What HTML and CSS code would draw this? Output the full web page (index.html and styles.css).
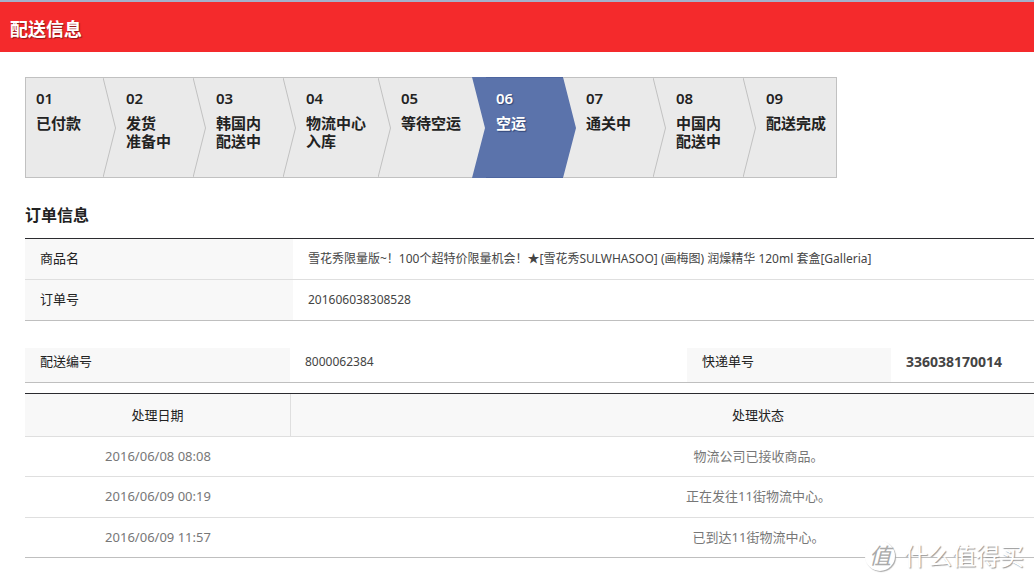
FILE: index.html
```html
<!DOCTYPE html>
<html lang="zh-CN">
<head>
<meta charset="utf-8">
<title>配送信息</title>
<link rel="stylesheet" href="styles.css">
</head>
<body>
<header class="page-header"><h1>配送信息</h1></header>
<main class="content">
  <ol class="steps">
    <li class="step first"><div class="step-text"><b>01</b><span>已付款</span></div><svg class="arrow" viewBox="0 0 13 101" preserveAspectRatio="none"><path class="edge" d="M0 0.5 12.5 51 0 100.5"/></svg></li>
    <li class="step"><div class="step-text"><b>02</b><span>发货<br>准备中</span></div><svg class="arrow" viewBox="0 0 13 101" preserveAspectRatio="none"><path class="edge" d="M0 0.5 12.5 51 0 100.5"/></svg></li>
    <li class="step"><div class="step-text"><b>03</b><span>韩国内<br>配送中</span></div><svg class="arrow" viewBox="0 0 13 101" preserveAspectRatio="none"><path class="edge" d="M0 0.5 12.5 51 0 100.5"/></svg></li>
    <li class="step wide"><div class="step-text"><b>04</b><span>物流中心<br>入库</span></div><svg class="arrow" viewBox="0 0 13 101" preserveAspectRatio="none"><path class="edge" d="M0 0.5 12.5 51 0 100.5"/></svg></li>
    <li class="step wide"><div class="step-text"><b>05</b><span>等待空运</span></div><svg class="arrow before-active" viewBox="0 0 14 101" preserveAspectRatio="none"><path class="fill-active" d="M0 0H14V101H0L13 51Z"/></svg></li>
    <li class="step active" aria-current="step"><div class="step-text"><b>06</b><span>空运</span></div><svg class="arrow" viewBox="0 0 13 101" preserveAspectRatio="none"><path class="fill-idle" d="M0 0H13V101H0L13 51Z"/><path class="edge" d="M0 0.5H13M0 100.5H13"/></svg></li>
    <li class="step"><div class="step-text"><b>07</b><span>通关中</span></div><svg class="arrow" viewBox="0 0 13 101" preserveAspectRatio="none"><path class="edge" d="M0 0.5 12.5 51 0 100.5"/></svg></li>
    <li class="step"><div class="step-text"><b>08</b><span>中国内<br>配送中</span></div><svg class="arrow" viewBox="0 0 13 101" preserveAspectRatio="none"><path class="edge" d="M0 0.5 12.5 51 0 100.5"/></svg></li>
    <li class="step last"><div class="step-text"><b>09</b><span>配送完成</span></div></li>
  </ol>

  <h2>订单信息</h2>
  <table class="info order">
    <tr><th scope="row">商品名</th><td>雪花秀限量版~！100个超特价限量机会！★[雪花秀SULWHASOO] (画梅图) 润燥精华 120ml 套盒[Galleria]</td></tr>
    <tr><th scope="row">订单号</th><td>201606038308528</td></tr>
  </table>

  <table class="info shipment">
    <tr><th scope="row" class="ship-label">配送编号</th><td>8000062384</td><th scope="row" class="track-label">快递单号</th><td class="track">336038170014</td></tr>
  </table>

  <table class="history">
    <thead><tr><th scope="col" class="date">处理日期</th><th scope="col" class="status">处理状态</th></tr></thead>
    <tbody>
      <tr><td>2016/06/08 08:08</td><td class="status">物流公司已接收商品。</td></tr>
      <tr class="middle"><td>2016/06/09 00:19</td><td class="status">正在发往11街物流中心。</td></tr>
      <tr><td>2016/06/09 11:57</td><td class="status">已到达11街物流中心。</td></tr>
    </tbody>
  </table>
</main>
<div class="watermark"><span class="seal">值</span><span>什么值得买</span></div>
</body>
</html>
```
FILE: styles.css
```css
* { box-sizing: border-box; }

body {
  margin: 0;
  background: #fff;
  color: #222;
  font: 13px/18px "Noto Sans", "Noto Sans CJK SC", sans-serif;
}

.page-header {
  padding: 15px 10px 11px;
  border-top: 2px solid #a3b1cb;
  background: #f42a2c;
}

h1 {
  margin: 0;
  color: #fff;
  font-size: 18px;
  line-height: 24px;
  text-shadow: 1px 1px 1px #8c1a1a;
}

.content { padding: 25px 0 24px 25px; }

.steps {
  display: flex;
  width: max-content;
  margin: 0;
  padding: 0;
  list-style: none;
}

.step {
  display: flex;
  justify-content: space-between;
  width: 90px;
  min-height: 101px;
  background: #eaeaea;
  box-shadow: inset 0 1px #c1c1c1, inset 0 -1px #c1c1c1;
  font-size: 15px;
  font-weight: bold;
  white-space: nowrap;
}

.step b { font-weight: 600; }

.step.wide { width: 95px; }
.step.first { width: 91px; border-left: 1px solid #c1c1c1; }
.step.last { width: 81px; border-right: 1px solid #c1c1c1; }

.step.active {
  background: #5b73ab;
  box-shadow: inset 0 1px #4d659f, inset 0 -1px #4d659f;
  color: #fff;
  text-shadow: 1px 1px 1px #2f4475;
}

.step-text {
  display: flex;
  flex-direction: column;
  gap: 7px;
  width: 0;
  padding: 12px 0 12px 10px;
}

.arrow {
  flex: none;
  width: 13px;
  height: auto;
}

.arrow.before-active { width: 14px; }

.edge { fill: none; stroke: #c1c1c1; }
.fill-active { fill: #5b73ab; }
.fill-idle { fill: #eaeaea; }

h2 {
  margin: 25px 0 11px;
  font-size: 16px;
  line-height: 24px;
}

table {
  width: 100%;
  border-collapse: separate;
  border-spacing: 0;
  table-layout: fixed;
}

th { font-weight: normal; }
td { font-size: 12px; }

.info th {
  padding: 0 15px 2px;
  background: #f8f8f8;
  text-align: left;
}

.info td { padding: 0 15px; color: #444; }

.order { border-top: 1px solid #2b2b2f; }
.order th { width: 268px; }
.order th, .order td { height: 41px; border-bottom: 1px solid #dfdfdf; }
.order tr:last-child > * { border-color: #bfbfbf; }

.shipment { margin-top: 27px; }
.shipment th, .shipment td {
  height: 35px;
  border-bottom: 1px solid #bfbfbf;
}
.shipment td { padding-bottom: 6px; }
.shipment th { padding-bottom: 8px; }
.shipment .ship-label { width: 265px; }
.shipment .track-label { width: 204px; }
.shipment .track { width: 143px; font-size: 14px; font-weight: bold; }

.history {
  margin-top: 10px;
  border-top: 1px solid #2b2b2f;
  text-align: center;
}
.history th {
  height: 43px;
  border-bottom: 1px solid #dfdfdf;
  background: #f8f8f8;
}
.history .date { width: 266px; border-right: 1px solid #dfdfdf; }
.history td {
  height: 40px;
  padding: 0 0 2px;
  border-bottom: 1px solid #dfdfdf;
  color: #777;
  font-size: 13px;
}
.history .middle td { height: 41px; }
.history .status { padding-left: 192px; }
.history tbody tr:last-child td { border-color: #bfbfbf; }

.watermark {
  position: absolute;
  right: 10px;
  bottom: 10px;
  display: flex;
  align-items: center;
  gap: 9px;
  color: #fff;
  font-size: 24px;
  line-height: 32px;
  text-shadow: 1px 1px 1px #999;
}

.seal {
  width: 30px;
  height: 30px;
  border-radius: 50%;
  background: #fff;
  box-shadow: 1px 1px 1px #aaa;
  color: #aaa;
  font-size: 22px;
  font-style: italic;
  line-height: 28px;
  text-align: center;
  text-shadow: none;
}
```
